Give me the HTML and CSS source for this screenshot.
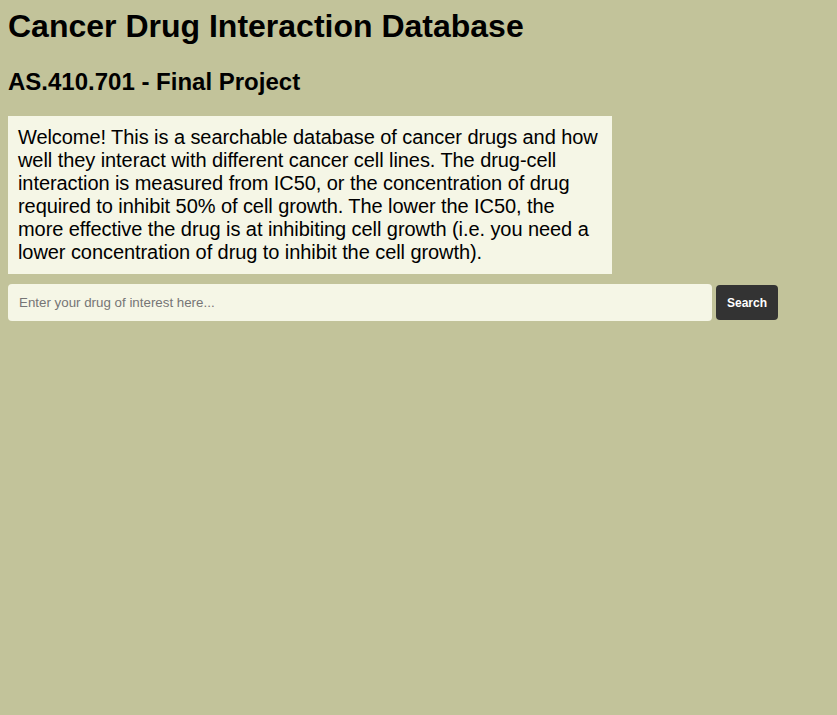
FILE: index.html
```html
<!DOCTYPE html>
<html lang="en">
<head>
<meta charset="utf-8">
<title>Cancer Drug Interaction Database</title>
<link rel="stylesheet" href="styles.css">
</head>
<body>
<h1 class="title">Cancer Drug Interaction Database</h1>
<h2 class="subtitle">AS.410.701 - Final Project</h2>
<p class="intro">Welcome! This is a searchable database of cancer drugs and how well they interact with different cancer cell lines. The drug-cell interaction is measured from IC50, or the concentration of drug required to inhibit 50% of cell growth. The lower the IC50, the more effective the drug is at inhibiting cell growth (i.e. you need a lower concentration of drug to inhibit the cell growth).</p>
<form class="search" onsubmit="return false;">
  <input class="search-input" type="text" placeholder="Enter your drug of interest here...">
  <button class="search-btn" type="submit">Search</button>
</form>
</body>
</html>
```
FILE: styles.css
```css
html, body {
  background: #c2c39a;
}
body {
  margin: 0;
  padding: 8px;
  font-family: "Liberation Sans", Arial, sans-serif;
  color: #000;
}
.title {
  font-size: 32px;
  font-weight: bold;
  margin: 0 0 23px;
}
.subtitle {
  font-size: 24px;
  font-weight: bold;
  margin: 0 0 20px;
}
.intro {
  width: 584px;
  margin: 0 0 10px;
  padding: 10px;
  background: #f5f6e6;
  font-size: 20px;
  line-height: 23px;
  letter-spacing: -0.07px;
}
.search {
  display: flex;
  align-items: center;
  gap: 4px;
}
.search-input {
  width: 704px;
  height: 37px;
  box-sizing: border-box;
  border: none;
  border-radius: 4px;
  background: #f5f6e6;
  padding: 0 11px;
  font-family: "Liberation Sans", Arial, sans-serif;
  font-size: 13.33px;
  outline: none;
}
.search-input::placeholder {
  color: #757575;
}
.search-btn {
  height: 35px;
  width: 62px;
  border: none;
  border-radius: 4px;
  background: #333333;
  color: #fff;
  font-family: "Liberation Sans", Arial, sans-serif;
  font-size: 12px;
  font-weight: bold;
  padding: 0;
}
```
